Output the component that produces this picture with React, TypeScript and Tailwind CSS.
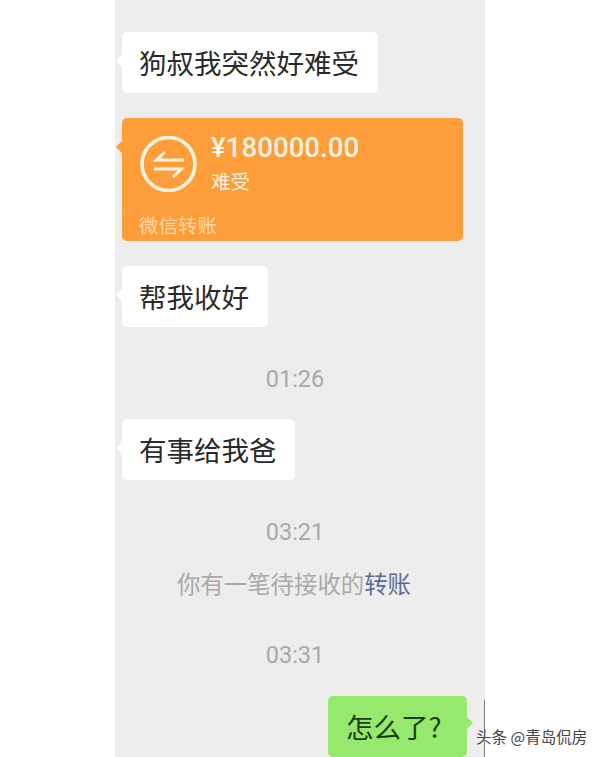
import React from "react";

const cjk = "font-['Noto_Sans_CJK_SC','Noto_Sans',sans-serif]";

function Tail({ color }: { color: string }) {
  return <span className={`absolute -left-[4px] top-[24px] h-[10px] w-[10px] rotate-45 ${color}`} />;
}

function Bubble({ text, width }: { text: string; width: string }) {
  return (
    <div className={`relative h-[61px] ${width} rounded-[5px] bg-white pl-[17px] text-[27.5px] leading-[60px] text-[#2a2a2a]`}>
      <Tail color="bg-white" />
      <span className="relative">{text}</span>
    </div>
  );
}

function Time({ text }: { text: string }) {
  return (
    <div className="flex h-[30px] justify-center pr-[17px] font-['Roboto',sans-serif] text-[23.5px] leading-[30px] text-[#a9a9a9]">
      {text}
    </div>
  );
}

export default function App() {
  return (
    <div className={`relative h-[757px] w-[600px] overflow-hidden bg-white ${cjk}`}>
      <div className="ml-[115px] flex h-[757px] w-[370px] flex-col bg-[#ededed] pl-[7px] pt-[32px]">
        <Bubble text="狗叔我突然好难受" width="w-[256px]" />

        <div className="relative mt-[25px] h-[123px] w-[341px] rounded-[5px] bg-[#fd9e3b] text-white">
          <span className="absolute -left-[4px] top-[24px] h-[10px] w-[10px] rotate-45 bg-[#fd9e3b]" />
          <div className="relative flex pl-[18px] pt-[17px]">
            <svg width="57" height="58" viewBox="0 0 57 58" fill="none" stroke="#fff3e2" strokeWidth="3.6">
              <circle cx="28.5" cy="29" r="26.5" />
              <path d="M44 25H16.5L25 17" strokeWidth="3" />
              <path d="M14 34H41.5L33 42" strokeWidth="3" />
            </svg>
            <div className="ml-[14px] flex flex-col">
              <span className="font-['Roboto',sans-serif] text-[27.5px] font-medium leading-[26px] tracking-[0.1px] text-[#fff3e2]">¥180000.00</span>
              <span className="mt-[7px] text-[19.5px] leading-[26px] text-[#fff0dc]">难受</span>
            </div>
          </div>
          <div className="absolute bottom-0 left-0 right-0 h-[31px] border-t border-[#fca34a] pl-[17px] text-[19.5px] leading-[27px] text-[#fdd7a8]">
            微信转账
          </div>
        </div>

        <div className="mt-[25px]">
          <Bubble text="帮我收好" width="w-[146px]" />
        </div>

        <div className="mt-[37px]">
          <Time text="01:26" />
        </div>

        <div className="mt-[25px]">
          <Bubble text="有事给我爸" width="w-[173px]" />
        </div>

        <div className="mt-[37px]">
          <Time text="03:21" />
        </div>

        <div className="mt-[21px] flex h-[30px] justify-center pr-[19px] text-[23.4px] leading-[30px] text-[#a9a9a9]">
          你有一笔待接收的<span className="text-[#5b6b92]">转账</span>
        </div>

        <div className="mt-[42px]">
          <Time text="03:31" />
        </div>

        <div className="relative ml-[206px] mt-[26px] h-[61px] w-[139px] rounded-[5px] bg-[#95e96c] pl-[18px] text-[27.5px] leading-[60px] text-[#1f3a14]">
          <span className="absolute -right-[4px] top-[22px] h-[10px] w-[10px] rotate-45 bg-[#95e96c]" />
          <span className="relative">怎么了?</span>
        </div>
      </div>

      <div className="absolute left-[484px] top-[700px] h-[57px] w-[1px] bg-[#777777]" />
      <div className="absolute left-[476px] top-[724px] text-[15.5px] leading-[24px] text-[#444444] [text-shadow:0_0_2px_#ffffff]">
        头条 @青岛侃房
      </div>
    </div>
  );
}
